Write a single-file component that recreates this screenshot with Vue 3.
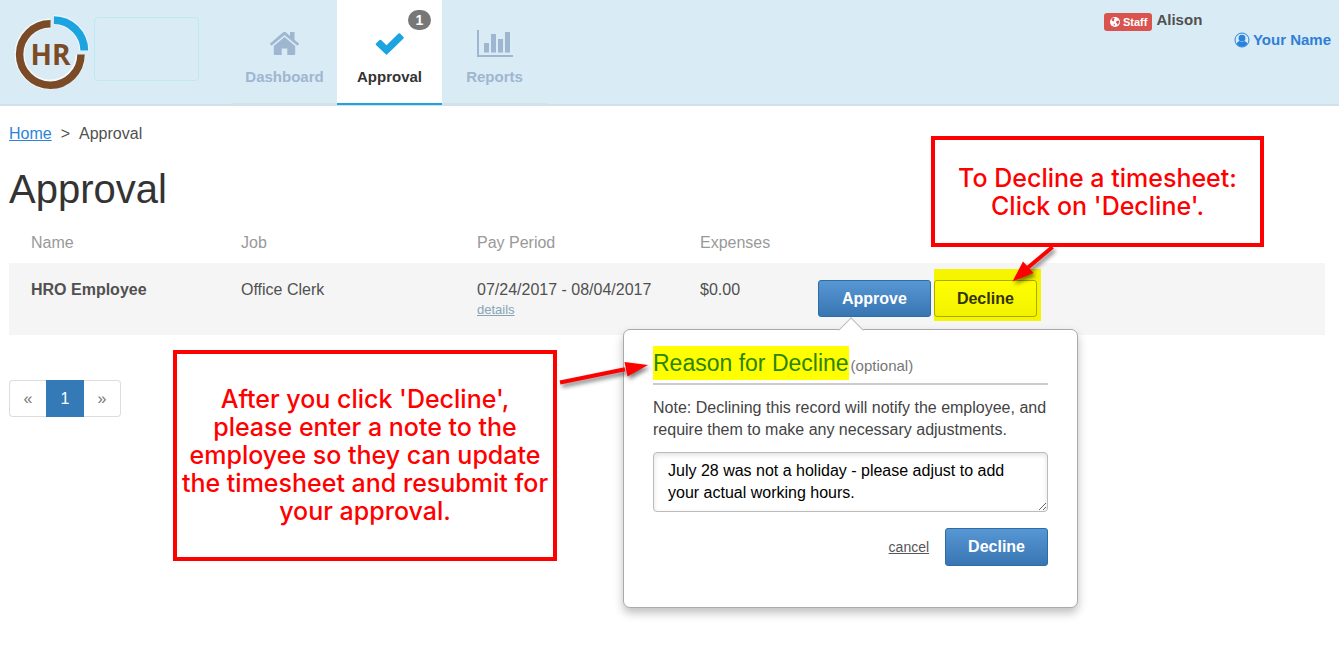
<script setup>
import { ref } from 'vue'

const reason = ref('July 28 was not a holiday - please adjust to add your actual working hours.')
const records = [
  { name: 'HRO Employee', job: 'Office Clerk', period: '07/24/2017 - 08/04/2017', expenses: '$0.00' },
]
</script>

<template>
  <div class="page">
    <header class="topbar">
      <svg class="logo" viewBox="0 0 80 80" role="img" aria-label="HR">
        <g fill="none">
          <path d="M40 11.500A30.500 30.500 0 1 0 70.500 43" stroke="#fff" stroke-opacity=".7" stroke-width="10" />
          <path d="M44 8A30 30 0 0 1 74 39" stroke="#fff" stroke-opacity=".6" stroke-width="10" />
          <path d="M40.500 11.800A30.700 30.700 0 1 0 71 42.500" stroke="#7a4b26" stroke-width="7.500" />
          <path d="M44 8.200A30.500 30.500 0 0 1 74.300 38.500" stroke="#1ca4e0" stroke-width="7.800" />
        </g>
        <text x="40.500" y="53" text-anchor="middle" class="logo-text">HR</text>
      </svg>
      <div class="brand-box"></div>
      <nav class="nav">
        <a href="#" class="nav-item">
          <svg class="nav-icon" viewBox="0 0 38 30">
            <g fill="#9fb6d0">
              <path d="M3.800 14.800 17.200 3.300q1.300-1 2.600 0l4.200 3.600V3h4.500v7.800l4.700 4-1.700 2L18.500 6 5.500 16.800z" />
              <path d="M7.800 17 18.500 8 29.200 17v7.800q0 1.200-1.200 1.200h-6.700v-6.500h-5.600V26H9q-1.200 0-1.200-1.200z" />
            </g>
          </svg>
          <span>Dashboard</span>
        </a>
        <a href="#" class="nav-item active">
          <svg class="nav-icon" viewBox="0 0 38 30">
            <path d="M5 14.500 8.500 11q.8-.7 1.600 0L15.500 16.300 27.500 4.500q.8-.7 1.600 0l3.400 3.400q.7.800 0 1.600L16.300 25.300q-.8.700-1.600 0L5 16.100q-.7-.8 0-1.600z" fill="#1ca4e0" />
          </svg>
          <span>Approval</span>
          <span class="count">1</span>
        </a>
        <a href="#" class="nav-item">
          <svg class="nav-icon" viewBox="0 0 38 30">
            <path d="M1 1h2v25h34v2H1zM8 14h5v9.500H8zM15 5h5v18.500h-5zM22 10h5v13.500h-5zM29 3h5v20.500h-5z" fill="#9fb6d0" />
          </svg>
          <span>Reports</span>
        </a>
      </nav>
      <div class="user">
        <div class="user-row">
          <span class="staff">
            <svg viewBox="0 0 12 12" class="globe">
              <circle cx="6" cy="6" r="5" fill="#fff" />
              <path d="M3 2.500l2-.8.800 1-1 .8.700.8-1.300 1.200L3 4.600 2.500 3.500zM7.500 5l2-.5 1 1.500-1 1.500-.7 1.500-.9-1.500-.9-1zM5 7.500l1 .7-.5 1.600L4.600 9z" fill="#d9534f" />
            </svg>
            Staff
          </span>
          <span>Alison</span>
        </div>
        <a href="#" class="your-name">
          <svg viewBox="0 0 16 16" class="avatar">
            <circle cx="8" cy="8" r="7" fill="none" stroke="#2a84dc" stroke-width="1" />
            <circle cx="8" cy="6.200" r="3.400" fill="#2a84dc" />
            <path d="M2.500 11.500Q4 9.300 5.600 9 8 10.800 10.400 9 12 9.300 13.500 11.500 11.500 14.700 8 14.700T2.500 11.500z" fill="#2a84dc" />
          </svg>
          Your Name
        </a>
      </div>
    </header>

    <main class="content">
      <nav class="crumbs" aria-label="Breadcrumb">
        <a href="#">Home</a><span>&gt;</span><span>Approval</span>
      </nav>
      <h1>Approval</h1>

      <table class="records">
        <colgroup>
          <col class="col-name" /><col class="col-job" /><col class="col-period" /><col class="col-expenses" /><col />
        </colgroup>
        <thead>
          <tr>
            <th>Name</th><th>Job</th><th>Pay Period</th><th>Expenses</th><td></td>
          </tr>
        </thead>
        <tbody>
          <tr v-for="r in records" :key="r.name">
            <td><strong>{{ r.name }}</strong></td>
            <td>{{ r.job }}</td>
            <td>{{ r.period }}<a href="#" class="details">details</a></td>
            <td>{{ r.expenses }}</td>
            <td>
              <div class="actions">
                <button type="button" class="btn primary approve">Approve</button>
                <div class="marked">
                  <button type="button" class="btn plain">Decline</button>
                </div>

                <form class="popover" @submit.prevent>
                  <h2><mark>Reason for Decline</mark><small>(optional)</small></h2>
                  <label for="reason">Note: Declining this record will notify the employee, and require them to make any necessary adjustments.</label>
                  <textarea id="reason" v-model="reason" rows="2"></textarea>
                  <div class="form-actions">
                    <a href="#">cancel</a>
                    <button type="submit" class="btn primary">Decline</button>
                  </div>
                  <aside class="callout note-callout">
                    After you click 'Decline',<br />please enter a note to the<br />employee so they can update<br />the timesheet and resubmit for<br />your approval.
                  </aside>
                  <svg class="arrow note-arrow" viewBox="0 0 100 40">
                    <path d="M5 25.500 70 12.200" stroke="#f00" stroke-width="4" />
                    <path d="M69.500 5 93 8 72.500 19.500z" fill="#f00" />
                  </svg>
                </form>

                <aside class="callout click-callout">To Decline a timesheet:<br />Click on 'Decline'.</aside>
                <svg class="arrow click-arrow" viewBox="0 0 60 50">
                  <path d="M46.500 5 22 25.500" stroke="#f00" stroke-width="4" />
                  <path d="M17 19.500 27.500 31 6.500 39.500z" fill="#f00" />
                </svg>
              </div>
            </td>
          </tr>
        </tbody>
      </table>

      <nav class="pager" aria-label="Pages">
        <a href="#">«</a><a href="#" class="current">1</a><a href="#">»</a>
      </nav>
    </main>
  </div>
</template>

<style>
body {
  margin: 0;
  background: #fff;
}
</style>

<style scoped>
.page {
  min-height: 100vh;
  font: 16px/22px "Liberation Sans", Arial, sans-serif;
  color: #505050;
}
.page * {
  box-sizing: border-box;
}
.topbar {
  display: flex;
  height: 106px;
  background: #d9ebf5;
  border-bottom: 2px solid #d3e0ea;
}
.logo {
  width: 80px;
  height: 80px;
  margin: 12px 4px 0 10px;
}
.logo-text {
  font: bold 28px "Open Sans", sans-serif;
  fill: #7a4b26;
}
.brand-box {
  width: 105px;
  height: 64px;
  margin-top: 17px;
  border: 1px solid #bdeaf0;
  border-radius: 4px;
}
.nav {
  display: flex;
  margin-left: 33px;
}
.nav-item {
  position: relative;
  display: flex;
  flex-direction: column;
  align-items: center;
  gap: 7px;
  width: 105px;
  height: 105px;
  padding-top: 29px;
  border-bottom: 2px solid #d3e3ec;
  color: #9fb6d0;
  font-size: 15px;
  font-weight: bold;
  text-decoration: none;
}
.nav-item.active {
  background: #fff;
  border-bottom-color: #1ca4e0;
  color: #333;
}
.nav-icon {
  width: 38px;
  height: 30px;
}
.count {
  position: absolute;
  top: 10px;
  right: 11px;
  width: 23px;
  height: 20px;
  border-radius: 10px;
  background: #777;
  color: #fff;
  font-size: 14px;
  line-height: 20px;
  text-align: center;
}
.user {
  width: 227px;
  margin: 9px 8px 0 auto;
  font-size: 15px;
  font-weight: bold;
}
.user-row {
  display: flex;
  gap: 4px;
}
.staff {
  display: flex;
  align-items: center;
  gap: 2px;
  height: 18px;
  margin-top: 4px;
  padding: 0 5px;
  border-radius: 3px;
  background: #d9534f;
  color: #fff;
  font-size: 11px;
}
.globe {
  width: 12px;
  height: 12px;
}
.your-name {
  display: flex;
  align-items: center;
  justify-content: flex-end;
  gap: 3px;
  margin-top: -2px;
  color: #2f7fd6;
  text-decoration: none;
}
.avatar {
  width: 16px;
  height: 16px;
}
.content {
  padding: 17px 14px 40px 9px;
}
.crumbs {
  display: flex;
  gap: 9px;
}
.crumbs a {
  color: #2a84dc;
}
h1 {
  margin: 20px 0 19px;
  color: #333;
  font-size: 40px;
  font-weight: normal;
  line-height: 48px;
}
.records {
  width: 100%;
  table-layout: fixed;
  border-collapse: collapse;
}
.col-name { width: 210px; }
.col-job { width: 236px; }
.col-period { width: 223px; }
.col-expenses { width: 118px; }
.records th,
.records td {
  padding: 0 0 0 22px;
  text-align: left;
  vertical-align: top;
}
.records th {
  height: 31px;
  color: #999;
  font-weight: normal;
}
.records tbody tr {
  height: 72px;
  background: #f5f5f5;
}
.records tbody td {
  padding-top: 16px;
}
.details {
  display: block;
  color: #86a3b8;
  font-size: 13px;
  line-height: 18px;
}
.actions {
  position: relative;
  display: flex;
  gap: 3px;
  margin-top: 1px;
}
.btn {
  height: 37px;
  padding: 0 22px;
  border: 1px solid #2f6ca5;
  border-radius: 3px;
  font: bold 16px "Liberation Sans", Arial, sans-serif;
}
.primary {
  background: linear-gradient(#5797d4, #3875b3);
  color: #fff;
}
.approve {
  padding: 0 23px;
}
.plain {
  position: relative;
  border-color: #a9a900;
  background: linear-gradient(#ff0, #f2f200);
  color: #333300;
}
.marked {
  position: relative;
}
.marked::before {
  content: "";
  position: absolute;
  inset: -11px -4px -4px 0;
  background: #f5f500;
}
.popover {
  position: absolute;
  top: 49px;
  left: -195px;
  width: 455px;
  padding: 16px 29px 41px;
  border: 1px solid #aaa;
  border-radius: 7px;
  background: #fff;
  box-shadow: 0 5px 10px rgba(0, 0, 0, 0.25);
}
.popover::before {
  content: "";
  position: absolute;
  top: -9px;
  left: 218px;
  width: 17px;
  height: 17px;
  border: solid #bbb;
  border-width: 1px 0 0 1px;
  background: #fff;
  transform: rotate(45deg);
}
.popover h2 {
  display: flex;
  align-items: baseline;
  gap: 2px;
  margin: 0 0 12px;
  padding-bottom: 3px;
  border-bottom: 2px solid #ccc;
  font-size: 23px;
  font-weight: normal;
  line-height: 34px;
}
mark {
  background: #ff0;
  color: #2c8500;
}
.popover h2 small {
  color: #777;
  font-size: 15px;
  line-height: 22px;
}
.popover label {
  display: block;
  color: #444;
}
.popover textarea {
  display: block;
  width: 100%;
  height: 60px;
  margin: 11px 0 16px;
  padding: 7px 14px;
  border: 1px solid #bbb;
  border-radius: 4px;
  box-shadow: inset 0 2px 5px rgba(0, 0, 0, 0.12);
  color: #000;
  font: 16px/22px "Liberation Sans", Arial, sans-serif;
  overflow: hidden;
  resize: vertical;
}
.form-actions {
  display: flex;
  align-items: center;
  justify-content: flex-end;
  gap: 16px;
}
.form-actions a {
  color: #555;
  font-size: 14px;
}
.form-actions .btn {
  height: 38px;
}
.callout {
  position: absolute;
  display: flow-root;
  border: 4px solid #f00;
  background: #fff;
  color: #f00;
  font: 500 25px/28px Inter, "Liberation Sans", sans-serif;
  text-align: center;
  white-space: nowrap;
}
.note-callout {
  top: 20px;
  right: calc(100% + 67px);
  width: 384px;
  height: 211px;
  padding-top: 31px;
}
.click-callout {
  top: -144px;
  left: 113px;
  width: 333px;
  height: 111px;
  padding-top: 24px;
}
.arrow {
  position: absolute;
  filter: drop-shadow(2px 3px 2px rgba(0, 0, 0, 0.5));
}
.note-arrow {
  top: 27px;
  left: -69px;
  width: 100px;
  height: 40px;
}
.click-arrow {
  top: -38px;
  left: 188px;
  width: 60px;
  height: 50px;
}
.pager {
  display: flex;
  margin-top: 45px;
}
.pager a {
  width: 37px;
  height: 37px;
  border: 1px solid #ddd;
  color: #777;
  line-height: 35px;
  text-align: center;
  text-decoration: none;
}
.pager a:first-child {
  border-right: 0;
  border-radius: 4px 0 0 4px;
}
.pager a:last-child {
  border-left: 0;
  border-radius: 0 4px 4px 0;
}
.pager .current {
  width: 38px;
  border-color: #337ab7;
  background: #337ab7;
  color: #fff;
}
</style>
